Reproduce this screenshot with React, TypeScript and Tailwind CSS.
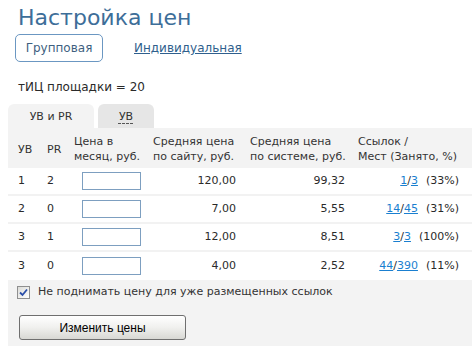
import React from "react";

const rows = [
  { uv: "1", pr: "2", site: "120,00", sys: "99,32", a: "1", b: "3", pct: "(33%)" },
  { uv: "2", pr: "0", site: "7,00", sys: "5,55", a: "14", b: "45", pct: "(31%)" },
  { uv: "3", pr: "1", site: "12,00", sys: "8,51", a: "3", b: "3", pct: "(100%)" },
  { uv: "3", pr: "0", site: "4,00", sys: "2,52", a: "44", b: "390", pct: "(11%)" },
];

const grid = "grid grid-cols-[29px_27px_79px_97px_108px_1fr]";

export default function App() {
  return (
    <div
      className="w-[472px] h-[348px] bg-white text-[#2a2a2a] text-[11px] overflow-hidden"
      style={{ fontFamily: '"DejaVu Sans", Verdana, sans-serif' }}
    >
      <div className="pl-[18px] pt-[4px] text-[22px] leading-[27px] text-[#3d6e99]">Настройка цен</div>
      <div className="flex items-center mt-[3px] pl-[15px]">
        <div className="w-[88px] h-[28px] rounded-[5px] border border-[#6b97c2] flex items-center justify-center text-[12px] text-[#3e5f80]">
          Групповая
        </div>
        <a className="ml-[31px] text-[12px] text-[#2f5f8d] underline">Индивидуальная</a>
      </div>
      <div className="pl-[18px] mt-[18px] text-[12px] leading-[14px]">тИЦ площадки = 20</div>

      <div className="ml-[8px] mt-[10px]">
        <div className="flex items-end gap-[4px] h-[24px]">
          <div className="w-[86px] h-[24px] rounded-t-[6px] bg-[#f3f3f3] flex items-center justify-center text-[#333] pt-[3px]">
            УВ и PR
          </div>
          <div className="w-[56px] h-[24px] rounded-t-[6px] bg-[#e6e6e6] flex items-center justify-center text-[#333] pt-[3px]">
            <span className="underline decoration-dashed decoration-[#555] underline-offset-[3px]">УВ</span>
          </div>
        </div>
        <div className="bg-[#f3f3f3] pt-[2px]">
          <div className={`${grid} pl-[10px] h-[38px] items-center leading-[15px] text-[#333]`}>
            <div>УВ</div>
            <div>PR</div>
            <div>Цена в<br />месяц, руб.</div>
            <div>Средняя цена<br />по сайту, руб.</div>
            <div>Средняя цена<br />по системе, руб.</div>
            <div>Ссылок /<br />Мест (Занято, %)</div>
          </div>
          {rows.map((r, i) => (
            <div
              key={i}
              className={`${grid} pl-[10px] pr-[13px] h-[28px] items-center bg-white text-[#2a2a2a] ${i < 3 ? "border-b-2 border-[#f2f2f2]" : ""}`}
            >
              <div>{r.uv}</div>
              <div>{r.pr}</div>
              <div className="pl-[8px]">
                <div className="w-[59px] h-[18px] border border-[#7d9fc0] bg-white" />
              </div>
              <div className="text-right pr-[14px]">{r.site}</div>
              <div className="text-right pr-[13px]">{r.sys}</div>
              <div className="text-right">
                <a className="text-[#1a7fd0] underline">{r.a}</a>/<a className="text-[#1a7fd0] underline">{r.b}</a>
                <span className="ml-[8px]">{r.pct}</span>
              </div>
            </div>
          ))}
          <div className="pl-[9px] pt-[6px] pb-[6px] h-[66px]">
            <div className="flex items-center gap-[8px] h-[13px]">
              <span className="w-[13px] h-[13px] border border-[#8f8f8f] bg-gradient-to-br from-[#dcdcd8] to-white flex items-center justify-center">
                <svg width="9" height="9" viewBox="0 0 9 9">
                  <path d="M1 4.5 L3.5 7 L8 1.5" stroke="#2a4ea8" strokeWidth="1.8" fill="none" />
                </svg>
              </span>
              <span className="text-[#333]">Не поднимать цену для уже размещенных ссылок</span>
            </div>
            <button
              className="mt-[16px] ml-[2px] w-[167px] h-[25px] rounded-[3px] border border-[#6f6f6f] bg-gradient-to-b from-white via-[#f0f0ee] to-[#d8d8d4] text-[12px] text-black"
              style={{ fontFamily: '"Liberation Sans", Arial, sans-serif' }}
            >
              Изменить цены
            </button>
          </div>
        </div>
      </div>
    </div>
  );
}
